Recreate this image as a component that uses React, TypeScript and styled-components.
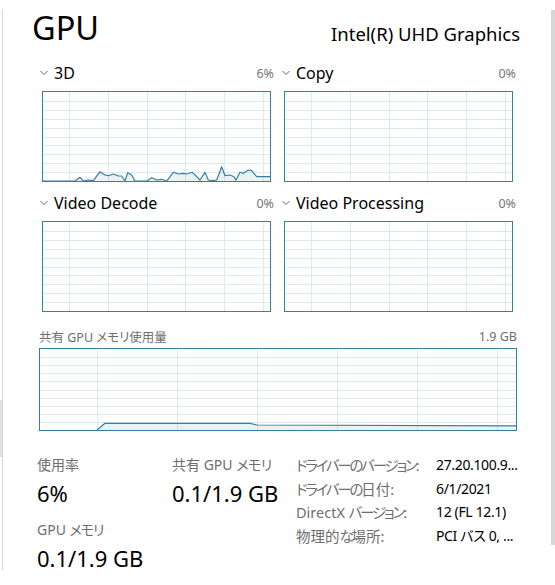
import React from "react";
import styled, { createGlobalStyle } from "styled-components";

const GlobalStyle = createGlobalStyle`
  html, body { margin: 0; padding: 0; background: #ffffff; }
  body {
    font-family: "Noto Sans", "Noto Sans CJK JP", sans-serif;
    color: #000000;
    font-feature-settings: "palt";
  }
  * { box-sizing: border-box; }
`;

const ACCENT = "#34809f";
const GRID = "#dce9ef";

const Window = styled.div`
  width: 555px;
  height: 585px;
  display: flex;
  background: #ffffff;
  overflow: hidden;
`;

const LeftEdge = styled.div`
  width: 3px;
  margin-top: 10px;
  height: 560px;
  border-right: 1px solid #d6d6d6;
  display: flex;
  flex-direction: column;
  padding-top: 390px;
`;

const EdgeNotch = styled.div`
  width: 2px;
  height: 57px;
  background: #e2e2e2;
`;

const Scrollbar = styled.div`
  width: 4px;
  margin-top: 10px;
  height: 535px;
  background: #d7d7d7;
`;

const Main = styled.div`
  flex: 1;
  padding-left: 32px;
  display: flex;
  flex-direction: column;
`;

const TopBar = styled.div`
  height: 61px;
  display: flex;
  align-items: baseline;
  justify-content: space-between;
  padding-top: 12px;
  padding-right: 31px;
`;

const Title = styled.h1`
  margin: 0 0 0 -3px;
  font-size: 32.5px;
  font-weight: 400;
  line-height: 1;
`;

const Adapter = styled.div`
  font-size: 18.5px;
  line-height: 1;
  position: relative;
  top: 1px;
`;

const EngineGrid = styled.div`
  display: grid;
  grid-template-columns: 234px 234px;
  column-gap: 8px;
  row-gap: 9px;
  margin-left: 5px;
`;

const Engine = styled.div`
  display: flex;
  flex-direction: column;
`;

const EngineHeader = styled.div`
  height: 24px;
  display: flex;
  align-items: center;
`;

const EngineName = styled.span`
  font-size: 16px;
  margin-left: 6px;
`;

const Percent = styled.span`
  margin-left: auto;
  font-size: 12.5px;
  color: #767676;
`;

const GraphBox = styled.div<{ $w: number; $h: number }>`
  width: ${(p) => p.$w}px;
  height: ${(p) => p.$h}px;
  border: 1px solid ${ACCENT};
  background: #ffffff;
  display: flex;
`;

const SmallGraph = styled(GraphBox)`
  margin-top: 6px;
  margin-left: 2px;
`;

const MemorySection = styled.div`
  margin-top: 14px;
  margin-left: 4px;
  width: 478px;
  display: flex;
  flex-direction: column;
`;

const MemoryHeader = styled.div`
  height: 20px;
  display: flex;
  align-items: center;
  justify-content: space-between;
  font-size: 12.5px;
  color: #6e6e6e;
`;

const MemoryGraph = styled(GraphBox)`
  margin-top: 2px;
`;

const Stats = styled.div`
  margin-top: 24px;
  margin-left: 2px;
  display: grid;
  grid-template-columns: 135px 124px auto;
`;

const StatColumn = styled.div`
  display: flex;
  flex-direction: column;
  row-gap: 13px;
`;

const Stat = styled.div`
  display: flex;
  flex-direction: column;
`;

const StatLabel = styled.div`
  font-size: 14px;
  line-height: 20px;
  color: #6e6e6e;
`;

const StatValue = styled.div`
  font-size: 22px;
  line-height: 28px;
  margin-top: 4px;
`;

const InfoTable = styled.div`
  margin-top: -2px;
  display: grid;
  grid-template-columns: 140px auto;
  grid-auto-rows: 23.5px;
  align-items: center;
  font-size: 14px;
`;

const InfoLabel = styled.div`
  color: #6e6e6e;
  white-space: nowrap;
  font-size: 14.5px;
`;

const Kana = styled.span<{ $squeeze: number }>`
  letter-spacing: ${(p) => -p.$squeeze}px;
`;

const InfoValue = styled.div`
  color: #000000;
  white-space: nowrap;
  letter-spacing: -0.35px;
`;

const KANA_RE = /([\u3040-\u30FF]+)/;

const Squeezed: React.FC<{ text: string; squeeze: number }> = ({ text, squeeze }) => (
  <>
    {text.split(KANA_RE).map((part, i) =>
      KANA_RE.test(part) ? (
        <Kana key={i} $squeeze={squeeze}>
          {part}
        </Kana>
      ) : (
        <React.Fragment key={i}>{part}</React.Fragment>
      )
    )}
  </>
);

type Pt = [number, number];

interface ChartProps {
  w: number;
  h: number;
  colOffset: number;
  colStep: number;
  rows: number;
  line?: Pt[];
}

const Chart: React.FC<ChartProps> = ({ w, h, colOffset, colStep, rows, line }) => {
  const vs: number[] = [];
  for (let x = colOffset; x < w; x += colStep) vs.push(Math.round(x) + 0.5);
  const hs: number[] = [];
  for (let i = 1; i < rows; i++) hs.push(Math.round((h * i) / rows) + 0.5);
  const pts = line ? line.map((p) => `${p[0]},${p[1]}`).join(" ") : "";
  const area = line
    ? `${line[0][0]},${h} ${pts} ${line[line.length - 1][0]},${h}`
    : "";
  return (
    <svg width={w} height={h} viewBox={`0 0 ${w} ${h}`}>
      {hs.map((y) => (
        <line key={`h${y}`} x1={0} x2={w} y1={y} y2={y} stroke={GRID} strokeWidth={1} />
      ))}
      {vs.map((x) => (
        <line key={`v${x}`} x1={x} x2={x} y1={0} y2={h} stroke={GRID} strokeWidth={1} />
      ))}
      {line && <polygon points={area} fill="rgba(52,128,159,0.10)" />}
      {line && (
        <polyline points={pts} fill="none" stroke={ACCENT} strokeWidth={1.2} strokeLinejoin="round" />
      )}
    </svg>
  );
};

const Chevron: React.FC = () => (
  <svg width="8" height="6" viewBox="0 0 8 6">
    <polyline points="0.5,1 4,4.5 7.5,1" fill="none" stroke="#666" strokeWidth="1" />
  </svg>
);

const abs3D: Pt[] = [
  [43, 181.5], [75, 181.5], [80, 177.3], [83.3, 181.5], [88.3, 180], [93.3, 180.7],
  [100, 171.7], [105, 175], [108.3, 175.7], [113.3, 174], [118.3, 176], [121.7, 176],
  [125, 181.5], [127.7, 172.7], [131.7, 175], [135, 181.5], [136.7, 181], [146.7, 181],
  [151.7, 177.7], [156.7, 180], [161.7, 179.3], [166.7, 181.5], [173.3, 172.3], [178.3, 174],
  [183.3, 173.3], [186.7, 174], [192.3, 172.3], [196.7, 176.7], [200, 180], [205, 172.3],
  [208.3, 180], [213.3, 180.7], [216.7, 180], [221.7, 166.7], [225, 175.7], [230, 175],
  [234, 176.7], [236, 180], [240, 172.3], [243.3, 173.3], [248.3, 170], [251.7, 170.7],
  [256.7, 176.7], [270, 176.7],
];
const line3D: Pt[] = abs3D.map((p) => [p[0] - 43, Math.min(p[1] - 92, 89)] as Pt);

const memLine: Pt[] = [
  [57, 81], [65, 74.3], [210, 74.3], [217, 76], [476, 76.8],
];

interface EngineData {
  name: string;
  pct: string;
  line?: Pt[];
}

const engines: EngineData[] = [
  { name: "3D", pct: "6%", line: line3D },
  { name: "Copy", pct: "0%" },
  { name: "Video Decode", pct: "0%" },
  { name: "Video Processing", pct: "0%" },
];

const info: [string, string][] = [
  ["ドライバーのバージョン:", "27.20.100.9..."],
  ["ドライバーの日付:", "6/1/2021"],
  ["DirectX バージョン:", "12 (FL 12.1)"],
  ["物理的な場所:", "PCI バス 0, ..."],
];

export default function App() {
  return (
    <>
      <GlobalStyle />
      <Window>
        <LeftEdge>
          <EdgeNotch />
        </LeftEdge>
        <Main>
          <TopBar>
            <Title>GPU</Title>
            <Adapter>Intel(R) UHD Graphics</Adapter>
          </TopBar>
          <EngineGrid>
            {engines.map((e) => (
              <Engine key={e.name}>
                <EngineHeader>
                  <Chevron />
                  <EngineName>{e.name}</EngineName>
                  <Percent>{e.pct}</Percent>
                </EngineHeader>
                <SmallGraph $w={229} $h={91}>
                  <Chart w={227} h={89} colOffset={26} colStep={38.8} rows={10} line={e.line} />
                </SmallGraph>
              </Engine>
            ))}
          </EngineGrid>
          <MemorySection>
            <MemoryHeader>
              <span>共有 GPU メモリ使用量</span>
              <span>1.9 GB</span>
            </MemoryHeader>
            <MemoryGraph $w={478} $h={83}>
              <Chart w={476} h={81} colOffset={57} colStep={80} rows={10} line={memLine} />
            </MemoryGraph>
          </MemorySection>
          <Stats>
            <StatColumn>
              <Stat>
                <StatLabel>使用率</StatLabel>
                <StatValue>6%</StatValue>
              </Stat>
              <Stat>
                <StatLabel>
                  <Squeezed text="GPU メモリ" squeeze={1} />
                </StatLabel>
                <StatValue>0.1/1.9 GB</StatValue>
              </Stat>
            </StatColumn>
            <StatColumn>
              <Stat>
                <StatLabel>
                  <Squeezed text="共有 GPU メモリ" squeeze={0.5} />
                </StatLabel>
                <StatValue>0.1/1.9 GB</StatValue>
              </Stat>
            </StatColumn>
            <InfoTable>
              {info.map(([k, v]) => (
                <React.Fragment key={k}>
                  <InfoLabel>
                    <Squeezed text={k} squeeze={2.2} />
                  </InfoLabel>
                  <InfoValue>{v}</InfoValue>
                </React.Fragment>
              ))}
            </InfoTable>
          </Stats>
        </Main>
        <Scrollbar />
      </Window>
    </>
  );
}
